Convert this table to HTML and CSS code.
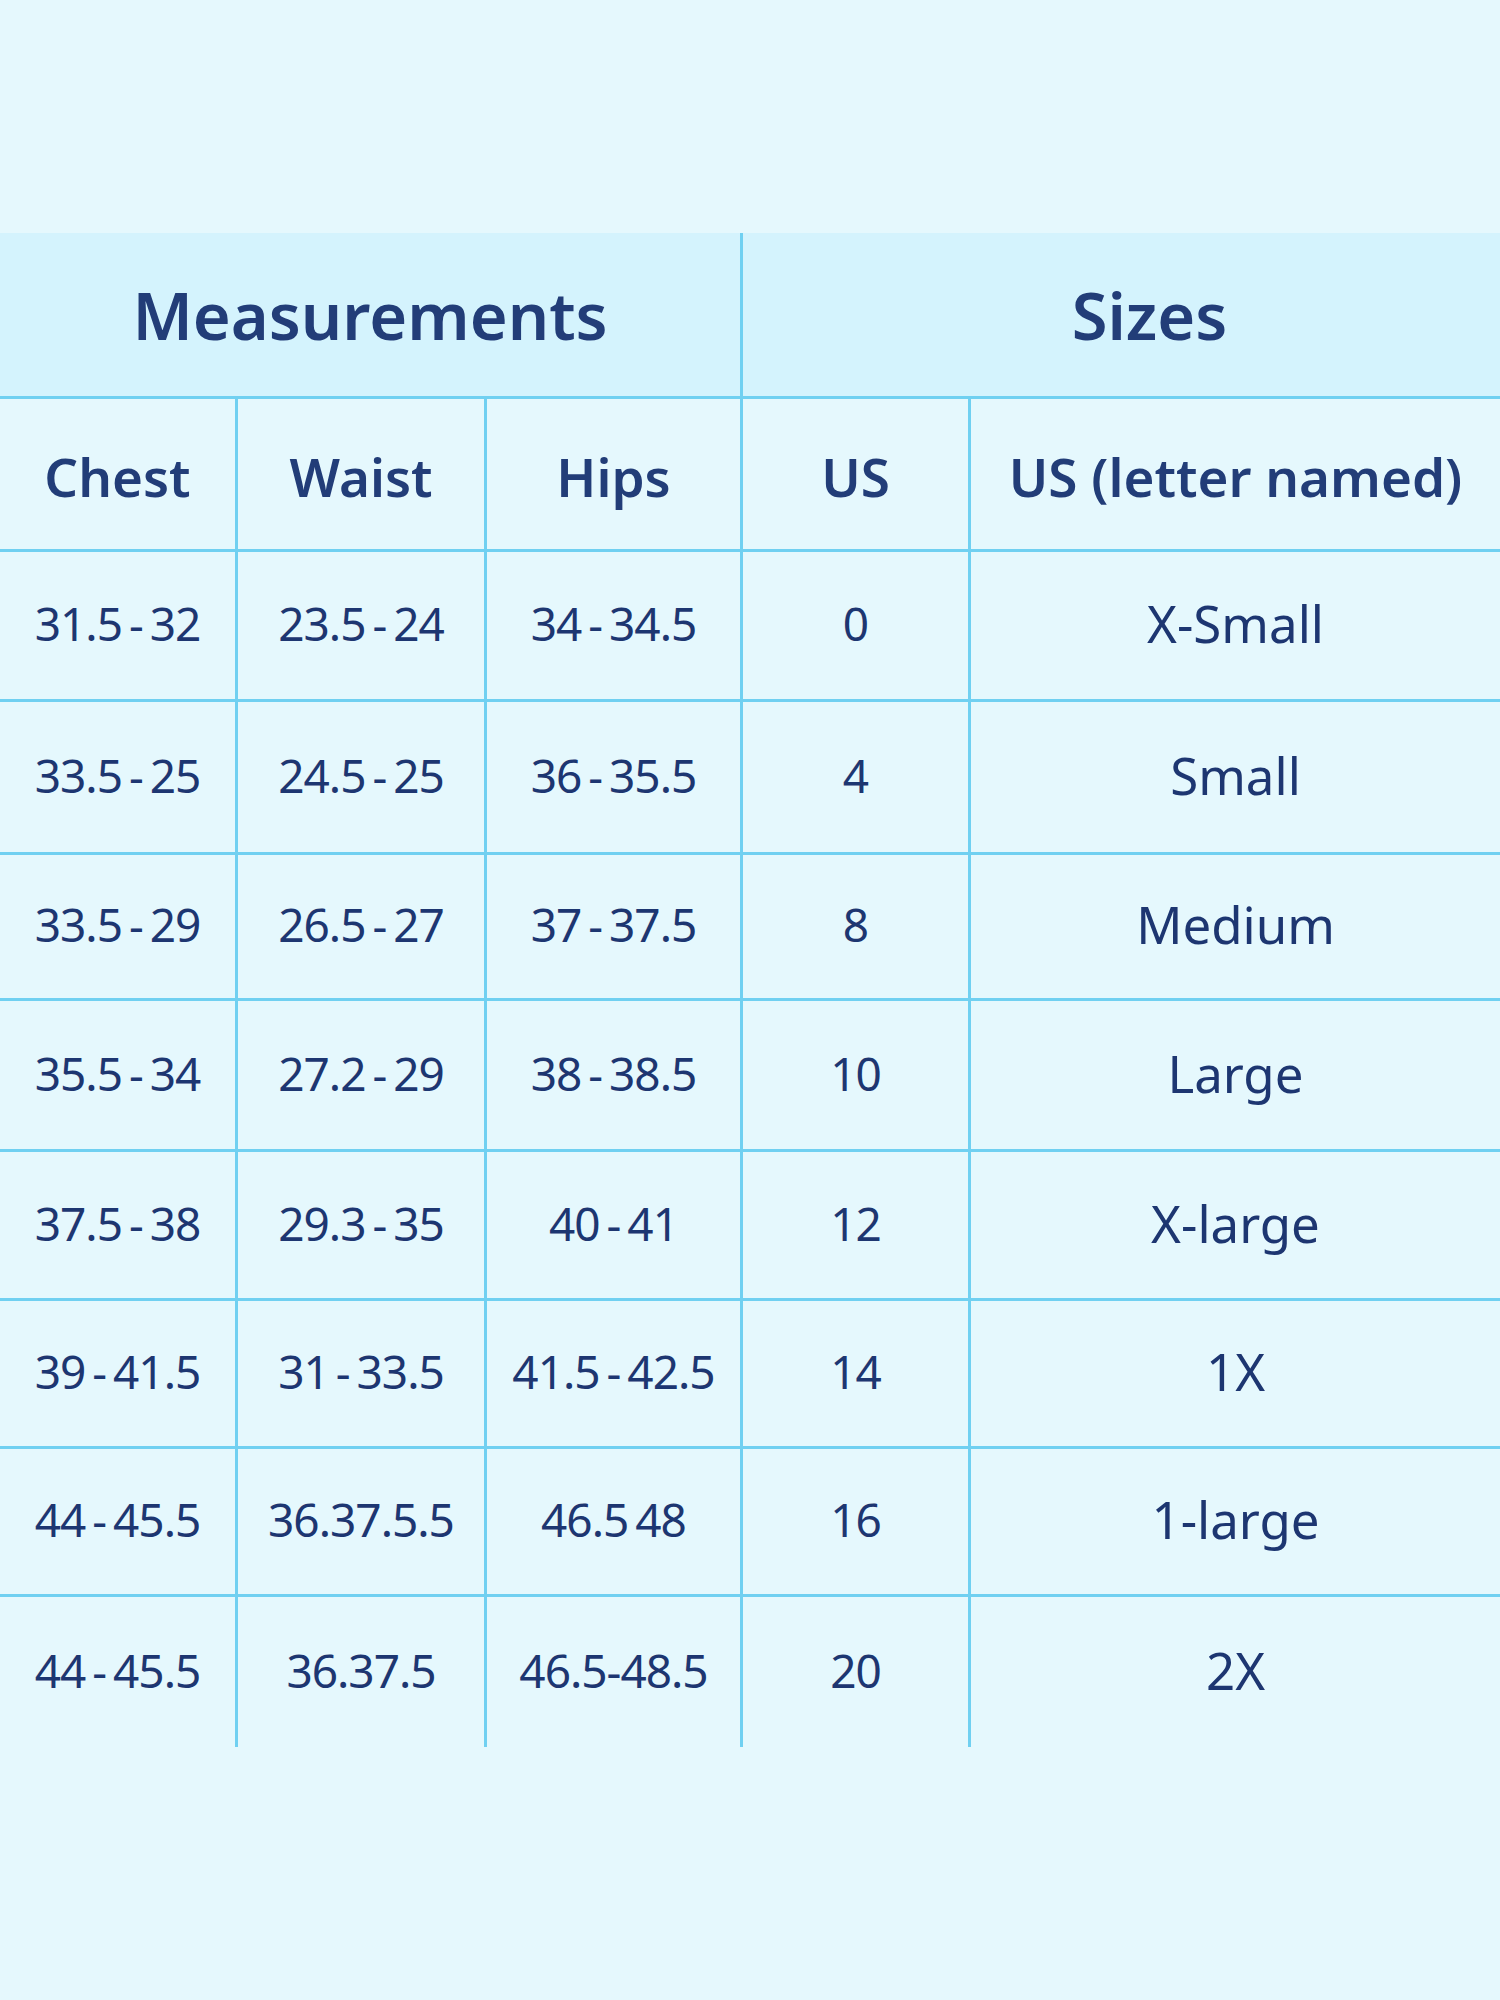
FILE: index.html
```html
<!DOCTYPE html>
<html lang="en">
<head>
<meta charset="utf-8">
<title>Size Chart</title>
<link rel="stylesheet" href="styles.css">
</head>
<body>
<main class="page">
  <div class="chart">
    <div class="cell group group-meas">Measurements</div>
    <div class="cell group group-sizes">Sizes</div>

    <div class="cell sub">Chest</div>
    <div class="cell sub">Waist</div>
    <div class="cell sub">Hips</div>
    <div class="cell sub">US</div>
    <div class="cell sub">US (letter named)</div>

    <div class="cell num">31.5 - 32</div>
    <div class="cell num">23.5 - 24</div>
    <div class="cell num">34 - 34.5</div>
    <div class="cell num">0</div>
    <div class="cell txt">X-Small</div>

    <div class="cell num">33.5 - 25</div>
    <div class="cell num">24.5 - 25</div>
    <div class="cell num">36 - 35.5</div>
    <div class="cell num">4</div>
    <div class="cell txt">Small</div>

    <div class="cell num">33.5 - 29</div>
    <div class="cell num">26.5 - 27</div>
    <div class="cell num">37 - 37.5</div>
    <div class="cell num">8</div>
    <div class="cell txt">Medium</div>

    <div class="cell num">35.5 - 34</div>
    <div class="cell num">27.2 - 29</div>
    <div class="cell num">38 - 38.5</div>
    <div class="cell num">10</div>
    <div class="cell txt">Large</div>

    <div class="cell num">37.5 - 38</div>
    <div class="cell num">29.3 - 35</div>
    <div class="cell num">40 - 41</div>
    <div class="cell num">12</div>
    <div class="cell txt">X-large</div>

    <div class="cell num">39 - 41.5</div>
    <div class="cell num">31 - 33.5</div>
    <div class="cell num">41.5 - 42.5</div>
    <div class="cell num">14</div>
    <div class="cell txt">1X</div>

    <div class="cell num">44 - 45.5</div>
    <div class="cell num">36.37.5.5</div>
    <div class="cell num">46.5 48</div>
    <div class="cell num">16</div>
    <div class="cell txt">1-large</div>

    <div class="cell num last">44 - 45.5</div>
    <div class="cell num last">36.37.5</div>
    <div class="cell num last">46.5-48.5</div>
    <div class="cell num last">20</div>
    <div class="cell txt last">2X</div>
  </div>
</main>
</body>
</html>
```
FILE: styles.css
```css
* { box-sizing: border-box; }

html, body {
  margin: 0;
  padding: 0;
  background: #e5f8fd;
}

.page {
  width: 1500px;
  min-height: 2000px;
  padding-top: 233px;
  background: #e5f8fd;
  font-family: "Noto Sans", "Open Sans", sans-serif;
  color: #1d3671;
}

.chart {
  display: grid;
  grid-template-columns: 235px 249px 256px 228px 532px;
  grid-template-rows: 166px 153px 150px 153px 146px 151px 149px 148px 148px 150px;
}

.cell {
  display: flex;
  align-items: center;
  justify-content: center;
  border-bottom: 3px solid #70d0f1;
  border-left: 3px solid #70d0f1;
  white-space: nowrap;
}

.cell:nth-child(5n + 3) { border-left: none; }

.group {
  background: #d4f3fd;
  font-size: 65px;
  font-weight: 600;
  color: #223d78;
}

.group-meas { grid-column: span 3; border-left: none; }
.group-sizes { grid-column: span 2; padding-left: 56px; }

.sub {
  font-size: 53px;
  font-weight: 600;
  color: #223d78;
  padding-top: 4px;
}

.num {
  font-size: 46px;
  letter-spacing: -1px;
  word-spacing: -4px;
  padding-bottom: 5px;
}

.txt {
  font-size: 51px;
  padding-bottom: 5px;
}

.last { border-bottom: none; }
```
